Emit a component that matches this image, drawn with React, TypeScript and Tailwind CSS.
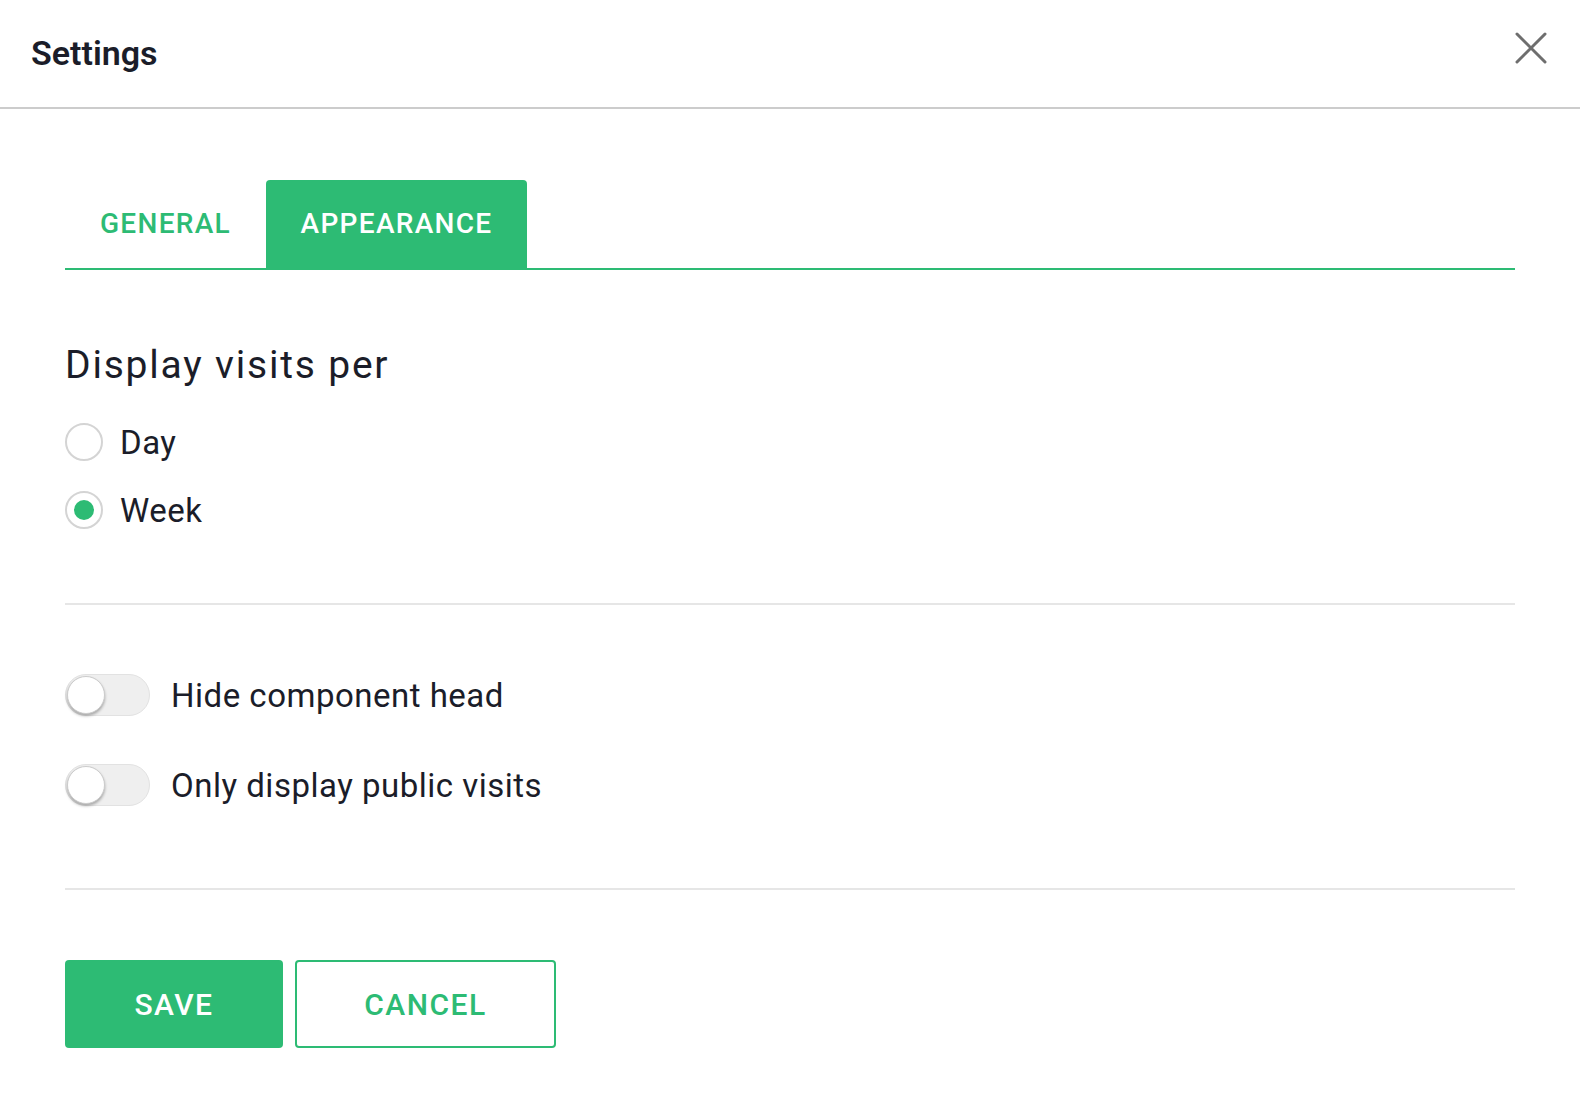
import React from "react";

function Radio({ checked, label }: { checked?: boolean; label: string }) {
  return (
    <div className="flex h-[68px] items-center gap-[17px]">
      <span className="flex h-[38px] w-[38px] items-center justify-center rounded-full border-2 border-[#d4d4d4] bg-white">
        {checked && <span className="h-[20px] w-[20px] rounded-full bg-[#2dbb74]" />}
      </span>
      <span className="text-[33px] leading-none tracking-[0.5px] text-[#1b1d29]">{label}</span>
    </div>
  );
}

function Toggle({ label }: { label: string }) {
  return (
    <div className="flex h-[90px] items-center gap-[21px]">
      <span className="relative flex h-[42px] w-[85px] items-center rounded-full border border-[#e2e2e2] bg-[#efefef]">
        <span className="absolute left-[1px] top-[1px] h-[38px] w-[38px] rounded-full border border-[#cccccc] bg-white shadow-[0_2px_3px_rgba(0,0,0,0.3)]" />
      </span>
      <span className="text-[33px] leading-none tracking-[0.5px] text-[#1b1d29]">{label}</span>
    </div>
  );
}

export default function App() {
  return (
    <div
      className="min-h-[1113px] w-full bg-white"
      style={{ fontFamily: "Roboto, 'Noto Sans', Arial, sans-serif" }}
    >
      <div className="flex h-[109px] items-center justify-between border-b-2 border-[#cccccc] pl-[31px] pr-[33px]">
        <h1 className="mt-[-2px] text-[34px] font-semibold leading-none text-[#1b1d29]">Settings</h1>
        <svg width="32" height="32" viewBox="0 0 32 32" className="mt-[-12px]">
          <path d="M2 2 L30 30 M30 2 L2 30" stroke="#6e6e6e" strokeWidth="3" strokeLinecap="round" />
        </svg>
      </div>

      <div className="px-[65px]">
        <div className="mt-[71px] flex h-[90px] items-stretch border-b-2 border-[#2dbb74]">
          <div className="flex w-[201px] items-center justify-center text-[28px] font-medium uppercase tracking-[1.3px] text-[#2dbb74]">
            General
          </div>
          <div className="flex w-[261px] items-center justify-center rounded-t-[4px] bg-[#2dbb74] text-[28px] font-medium uppercase tracking-[1.3px] text-white">
            Appearance
          </div>
        </div>

        <h2 className="mt-[76px] text-[39px] leading-none tracking-[1.8px] text-[#1b1d29]">Display visits per</h2>
        <div className="mt-[23px] flex flex-col">
          <Radio label="Day" />
          <Radio label="Week" checked />
        </div>

        <div className="mt-[59px] h-[2px] bg-[#e6e6e6]" />

        <div className="mt-[45px] flex flex-col">
          <Toggle label="Hide component head" />
          <Toggle label="Only display public visits" />
        </div>

        <div className="mt-[58px] h-[2px] bg-[#e6e6e6]" />

        <div className="mt-[70px] flex gap-[12px]">
          <button className="flex h-[88px] w-[218px] items-center justify-center rounded-[4px] bg-[#2dbb74] text-[30px] font-medium uppercase tracking-[1.5px] text-white">
            Save
          </button>
          <button className="flex h-[88px] w-[261px] items-center justify-center rounded-[4px] border-2 border-[#2dbb74] bg-white text-[30px] font-medium uppercase tracking-[1.5px] text-[#2dbb74]">
            Cancel
          </button>
        </div>
      </div>
    </div>
  );
}
